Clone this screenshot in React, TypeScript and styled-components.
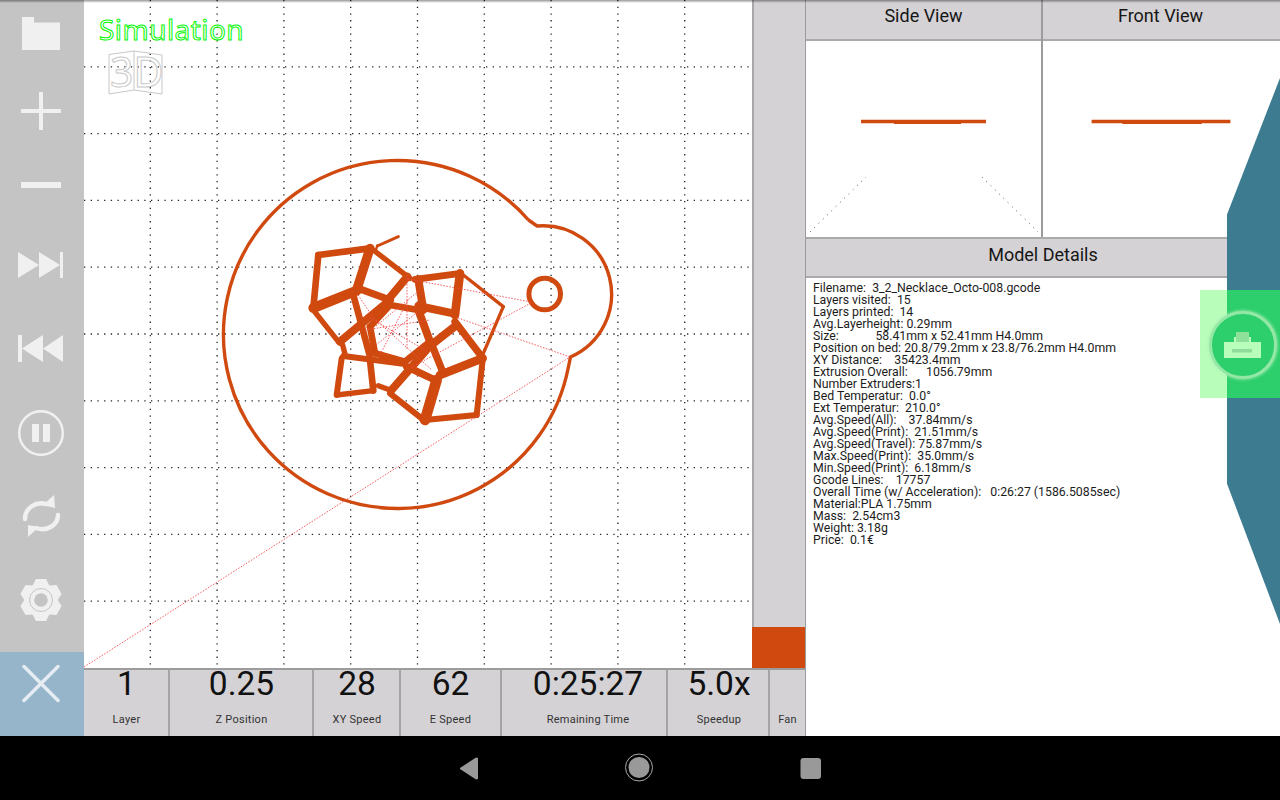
import styled, { createGlobalStyle } from 'styled-components';

const ORANGE = '#d04a10';
const PANEL = '#d4d2d5';
const RULE = '#9c9c9c';
const ICON = '#f0f0f0';

const stats = [
  { value: '1', label: 'Layer', width: 86, pad: 1 },
  { value: '0.25', label: 'Z Position', width: 144, pad: 1 },
  { value: '28', label: 'XY Speed', width: 87, pad: 1 },
  { value: '62', label: 'E Speed', width: 101, pad: 0 },
  { value: '0:25:27', label: 'Remaining Time', width: 166, pad: 8 },
  { value: '5.0x', label: 'Speedup', width: 102, pad: 2 },
  { value: '', label: 'Fan', width: 35, pad: 0 },
];

const details = [
  'Filename:  3_2_Necklace_Octo-008.gcode',
  'Layers visited:  15',
  'Layers printed:  14',
  'Avg.Layerheight: 0.29mm',
  'Size:            58.41mm x 52.41mm H4.0mm',
  'Position on bed: 20.8/79.2mm x 23.8/76.2mm H4.0mm',
  'XY Distance:    35423.4mm',
  'Extrusion Overall:      1056.79mm',
  'Number Extruders:1',
  'Bed Temperatur:  0.0°',
  'Ext Temperatur:  210.0°',
  'Avg.Speed(All):    37.84mm/s',
  'Avg.Speed(Print):  21.51mm/s',
  'Avg.Speed(Travel): 75.87mm/s',
  'Max.Speed(Print):  35.0mm/s',
  'Min.Speed(Print):  6.18mm/s',
  'Gcode Lines:    17757',
  'Overall Time (w/ Acceleration):   0:26:27 (1586.5085sec)',
  'Material:PLA 1.75mm',
  'Mass:  2.54cm3',
  'Weight: 3.18g',
  'Price:  0.1€',
];

// extruded segments in 3x coords of the flower area: x1, y1, x2, y2, width
const segments = [
  [262, 78, 325, 50, 9], [258, 90, 262, 76, 7],
  [85, 105, 240, 85, 20], [240, 85, 200, 210, 28], [200, 212, 70, 264, 30], [70, 264, 85, 105, 20],
  [250, 90, 360, 175, 16], [352, 170, 295, 238, 24], [295, 238, 205, 205, 22],
  [375, 178, 512, 160, 20], [510, 160, 495, 285, 26], [490, 280, 385, 258, 24], [385, 178, 400, 270, 24],
  [520, 165, 640, 260, 10], [640, 260, 580, 400, 10], [495, 305, 575, 410, 22],
  [578, 420, 560, 585, 18], [560, 585, 405, 600, 18], [405, 600, 440, 480, 32], [450, 465, 578, 415, 26],
  [430, 385, 460, 460, 22], [350, 440, 435, 480, 22], [300, 520, 395, 595, 18], [305, 510, 420, 378, 24],
  [420, 378, 500, 315, 24],
  [155, 415, 140, 525, 18], [140, 525, 250, 512, 16], [250, 512, 240, 420, 20], [160, 408, 345, 432, 18],
  [70, 270, 145, 365, 16], [150, 365, 300, 240, 24], [190, 225, 240, 410, 20], [158, 375, 165, 402, 16],
  [265, 497, 300, 510, 16],
  [300, 255, 385, 270, 20], [385, 270, 420, 365, 24], [420, 365, 345, 425, 20],
  [345, 425, 255, 400, 20], [255, 400, 240, 320, 20], [240, 320, 300, 255, 20],
];

const travels = [
  [84, 667, 570, 357], [408, 279, 531, 302], [531, 303, 410, 368], [458, 318, 570, 357],
  [376, 326, 420, 290], [370, 318, 425, 350], [376, 345, 420, 310], [407, 275, 407, 350],
  [365, 330, 430, 320], [358, 295, 375, 320], [376, 320, 432, 370], [380, 355, 408, 300],
];

const gearPoints = () => {
  const points: string[] = [];
  for (let i = 0; i < 6; i++) {
    const a = (i * Math.PI) / 3 - Math.PI / 2;
    [[-0.62, 17], [-0.3, 21.500], [0.3, 21.500], [0.62, 17]].forEach(([d, r]) => {
      points.push(`${(41 + r * Math.cos(a + d * 0.8)).toFixed(1)},${(22 + r * Math.sin(a + d * 0.8)).toFixed(1)}`);
    });
  }
  return points.join(' ');
};

const GlobalStyle = createGlobalStyle`
  html, body { margin: 0; padding: 0; background: #000; }
  body { font-family: Roboto, "Liberation Sans", sans-serif; }
`;

const Screen = styled.div`
  position: relative;
  width: 1280px;
  height: 800px;
  overflow: hidden;
  display: flex;
  flex-direction: column;
`;

const TopShade = styled.div`
  position: absolute;
  top: 0;
  left: 0;
  right: 0;
  height: 3px;
  background: linear-gradient(rgba(0, 0, 0, 0.4), rgba(0, 0, 0, 0));
`;

const Workspace = styled.div`
  display: flex;
  height: 736px;
  background: #fff;
`;

const Sidebar = styled.div`
  width: 84px;
  flex-shrink: 0;
  display: flex;
  flex-direction: column;
  background: #c4c4c4;
`;

const ToolList = styled.div`
  height: 652px;
  padding-top: 17px;
  box-sizing: border-box;
`;

const ToolIcon = styled.svg<{ $top?: number }>`
  display: block;
  width: 84px;
  margin-top: ${(p) => p.$top ?? 0}px;
  fill: ${ICON};
  stroke: none;
`;

const CloseButton = styled.div`
  height: 84px;
  background: #96b4ca;
  display: flex;
  align-items: flex-start;
`;

const Center = styled.div`
  width: 721px;
  flex-shrink: 0;
  display: flex;
  flex-direction: column;
`;

const ViewRow = styled.div`
  display: flex;
  height: 668px;
`;

const Canvas = styled.div`
  position: relative;
  width: 668px;
  height: 668px;
  background: #fff;
`;

const Plot = styled.svg`
  display: block;
  width: 668px;
  height: 668px;
`;

const SimLabel = styled.span`
  position: absolute;
  left: 15px;
  top: 10px;
  font-family: "Noto Sans", sans-serif;
  font-size: 28px;
  line-height: 38px;
  letter-spacing: 0.45px;
  color: #fff;
  -webkit-text-stroke: 1px #00f800;
`;

const LayerSlider = styled.div`
  width: 53px;
  display: flex;
  flex-direction: column;
  justify-content: flex-end;
  box-sizing: border-box;
  background: ${PANEL};
  border-left: 2px solid #a8a8a8;
`;

const LayerFill = styled.div`
  height: 41px;
  margin-left: -2px;
  background: ${ORANGE};
`;

const StatRow = styled.div`
  display: flex;
  height: 68px;
  box-sizing: border-box;
  background: ${PANEL};
  border-top: 2px solid ${RULE};
`;

const StatCell = styled.div<{ $width: number; $pad: number }>`
  width: ${(p) => p.$width}px;
  padding-left: ${(p) => p.$pad}px;
  box-sizing: border-box;
  border-right: 2px solid #a4a4a4;
  display: flex;
  flex-direction: column;
  align-items: center;
  &:last-child { border-right: none; }
`;

const StatValue = styled.div`
  height: 40px;
  font-size: 33.500px;
  line-height: 28px;
  color: #111;
`;

const StatLabel = styled.div`
  font-size: 11px;
  line-height: 20px;
  letter-spacing: 0.25px;
  color: #333;
`;

const RightPanel = styled.div`
  flex: 1;
  display: flex;
  flex-direction: column;
  border-left: 1px solid #9c9c9c;
`;

const Views = styled.div`
  display: flex;
  height: 237px;
`;

const ViewColumn = styled.div<{ $width: number }>`
  width: ${(p) => p.$width}px;
  display: flex;
  flex-direction: column;
  box-sizing: border-box;
  & + & { border-left: 2px solid ${RULE}; }
`;

const PanelHeader = styled.div<{ $inset?: number }>`
  height: 41px;
  flex-shrink: 0;
  box-sizing: border-box;
  padding-right: ${(p) => p.$inset ?? 0}px;
  background: ${PANEL};
  border-bottom: 2px solid #aaa;
  font-size: 18px;
  line-height: 31px;
  text-align: center;
  color: #161616;
`;

const ViewSvg = styled.svg`
  display: block;
  flex: 1;
  width: 100%;
`;

const DetailsHeader = styled(PanelHeader)`
  border-top: 2px solid #aaa;
  line-height: 32px;
`;

const DetailsText = styled.div`
  padding: 4px 0 0 7px;
  font-size: 12.300px;
  line-height: 12px;
  white-space: pre;
  color: #1c1c1c;
`;

const SideFin = styled.div`
  position: absolute;
  right: 0;
  top: 78px;
  width: 53px;
  height: 546px;
  background: #3d7b90;
  clip-path: polygon(100% 0, 0 25%, 0 74.3%, 100% 100%);
`;

const PrintTab = styled.div`
  position: absolute;
  left: 1200px;
  top: 290px;
  width: 80px;
  height: 108px;
  background: linear-gradient(90deg, #b9fdba 27px, #2dce6c 27px);
`;

const PrintBadge = styled.div`
  position: absolute;
  left: 9px;
  top: 21px;
  width: 68px;
  height: 68px;
  box-sizing: border-box;
  border-radius: 50%;
  background: #2dce6c;
  border: 3px solid #93e8a6;
  box-shadow: 0 0 3px 1px rgba(170, 240, 180, 0.7);
  display: flex;
  align-items: center;
  justify-content: center;
`;

const NavBar = styled.div`
  height: 64px;
  background: #000;
`;

const NavIcons = styled.svg`
  display: block;
  width: 1280px;
  height: 64px;
`;

const Diagonals = styled.svg`
  position: absolute;
  left: 806px;
  top: 172px;
  width: 236px;
  height: 64px;
`;

function PrinterGlyph() {
  return (
    <svg width="38" height="28" viewBox="0 0 38 28">
      <rect x="10" y="6" width="17" height="8" fill="#b9fdba" />
      <rect x="12" y="1" width="13" height="11" fill="#8fe09a" />
      <rect x="0" y="11" width="37" height="16" fill="#b9fdba" />
      <rect x="8" y="18" width="20" height="3.5" fill="#8fdc9a" />
    </svg>
  );
}

function ProfileLine({ width, x1, x2, x3, x4 }: { width: number; x1: number; x2: number; x3: number; x4: number }) {
  return (
    <ViewSvg viewBox={`0 0 ${width} 196`} preserveAspectRatio="none">
      <line x1={x1} y1="80.500" x2={x2} y2="80.500" stroke={ORANGE} strokeWidth="3.500" />
      <line x1={x3} y1="81.500" x2={x4} y2="81.500" stroke={ORANGE} strokeWidth="3" />
    </ViewSvg>
  );
}

function DiagonalMarks() {
  return (
    <Diagonals viewBox="0 0 236 64">
      <g stroke="#555" strokeWidth="1" strokeDasharray="1 5">
        <line x1="4" y1="60" x2="60" y2="5" />
        <line x1="176" y1="5" x2="232" y2="60" />
      </g>
    </Diagonals>
  );
}

export default function App() {
  const grid = Array.from({ length: 9 }, (_, i) => (i + 1) * 66.8);
  return (
    <Screen>
      <GlobalStyle />
      <Workspace>
        <Sidebar>
          <ToolList>
            <ToolIcon viewBox="0 0 84 33" height="33">
              <path d="M22 0h12v5.500h26V33H22z" />
            </ToolIcon>
            <ToolIcon $top={42} viewBox="0 0 84 38" height="38">
              <rect x="39" y="0" width="4" height="38" />
              <rect x="21" y="17" width="40" height="4" />
            </ToolIcon>
            <ToolIcon $top={51} viewBox="0 0 84 7" height="7">
              <rect x="21" y="1" width="40" height="6" />
            </ToolIcon>
            <ToolIcon $top={64} viewBox="0 0 84 26" height="26">
              <path d="M18 0l21 13-21 13zM39 0l21 13-21 13z" />
              <rect x="60" y="0" width="3" height="26" />
            </ToolIcon>
            <ToolIcon $top={57} viewBox="0 0 84 27" height="27">
              <path d="M43 0v27L22 13.500zM63 0v27L43 13.500z" />
              <rect x="18" y="0" width="4" height="27" />
            </ToolIcon>
            <ToolIcon $top={48} viewBox="0 0 84 46" height="46">
              <circle cx="41" cy="23" r="21.800" fill="none" stroke={ICON} strokeWidth="2.500" />
              <rect x="32" y="14" width="7" height="18" />
              <rect x="43" y="14" width="7" height="18" />
            </ToolIcon>
            <ToolIcon $top={39} viewBox="0 0 84 42" height="42">
              <path d="M25 24C25 13 36 6 46 9" fill="none" stroke={ICON} strokeWidth="4.500" strokeLinecap="round" />
              <path d="M54 0l1 13-12-3z" />
              <path d="M58 20C58 30 47 37 36 33" fill="none" stroke={ICON} strokeWidth="4.500" strokeLinecap="round" />
              <path d="M28 30l11 2-11 10z" />
            </ToolIcon>
            <ToolIcon $top={41} viewBox="0 0 84 44" height="44">
              <polygon points={gearPoints()} />
              <circle cx="41" cy="22" r="11.500" fill="none" stroke="#c4c4c4" strokeWidth="1" />
              <circle cx="41" cy="22" r="6.800" fill="#c4c4c4" />
            </ToolIcon>
          </ToolList>
          <CloseButton>
            <ToolIcon $top={13} viewBox="0 0 84 38" height="38">
              <path d="M24 1.500l34 34M58 1.500l-34 34" stroke="#e6edf2" strokeWidth="3.500" strokeLinecap="round" fill="none" />
            </ToolIcon>
          </CloseButton>
        </Sidebar>

        <Center>
          <ViewRow>
            <Canvas>
              <Plot viewBox="84 0 668 668">
                <g stroke="#222" strokeWidth="1.300" strokeDasharray="1.300 5.400">
                  {grid.map((p) => (
                    <line key={`v${p}`} x1={83.5 + p} y1="0" x2={83.5 + p} y2="668" />
                  ))}
                  {grid.map((p) => (
                    <line key={`h${p}`} x1="84" y1={p} x2="752" y2={p} />
                  ))}
                </g>
                <g fill="none" stroke="#c8c8c8" strokeWidth="1">
                  <path d="M109 54.500L134 51l28 4v39l-28-4-25 4zM134 51v39" />
                  <text x="110" y="87" fontFamily="Noto Sans, sans-serif" fontSize="41">3D</text>
                </g>
                <path
                  d="M528.500 220L537 226A68.500 68.500 0 0 1 570.500 357L568.200 368A174 174 0 1 1 528.500 220"
                  fill="none"
                  stroke={ORANGE}
                  strokeWidth="3.400"
                />
                <circle cx="544.700" cy="294" r="15.800" fill="none" stroke={ORANGE} strokeWidth="5" />
                <g transform="translate(290 220) scale(0.3333)" stroke={ORANGE} strokeLinecap="round" fill="none">
                  {segments.map(([x1, y1, x2, y2, w]) => (
                    <line key={`${x1}-${y1}-${x2}`} x1={x1} y1={y1} x2={x2} y2={y2} strokeWidth={w} />
                  ))}
                </g>
                <g stroke="#f4484c" strokeWidth="0.900" strokeDasharray="1.500 1.500">
                  {travels.map(([x1, y1, x2, y2]) => (
                    <line key={`${x1}-${y1}-${x2}`} x1={x1} y1={y1} x2={x2} y2={y2} />
                  ))}
                </g>
              </Plot>
              <SimLabel>Simulation</SimLabel>
            </Canvas>
            <LayerSlider>
              <LayerFill />
            </LayerSlider>
          </ViewRow>
          <StatRow>
            {stats.map((s) => (
              <StatCell key={s.label} $width={s.width} $pad={s.pad}>
                <StatValue>{s.value}</StatValue>
                <StatLabel>{s.label}</StatLabel>
              </StatCell>
            ))}
          </StatRow>
        </Center>

        <RightPanel>
          <Views>
            <ViewColumn $width={235}>
              <PanelHeader>Side View</PanelHeader>
              <ProfileLine width={235} x1={55} x2={180} x3={88} x4={155} />
              <DiagonalMarks />
            </ViewColumn>
            <ViewColumn $width={239}>
              <PanelHeader $inset={2}>Front View</PanelHeader>
              <ProfileLine width={239} x1={49} x2={189} x3={80} x4={160} />
            </ViewColumn>
          </Views>
          <DetailsHeader>Model Details</DetailsHeader>
          <DetailsText>{details.join('\n')}</DetailsText>
        </RightPanel>
      </Workspace>

      <NavBar>
        <NavIcons viewBox="0 0 1280 64">
          <path d="M478 22v21l-2 .5L460 33v-1l16-10.500z" fill="#999" />
          <circle cx="639" cy="31.500" r="13.500" fill="none" stroke="#aaa" strokeWidth="1" />
          <circle cx="639" cy="31.500" r="10.500" fill="#999" />
          <rect x="800.500" y="22" width="20.500" height="21" rx="3" fill="#999" />
        </NavIcons>
      </NavBar>

      <TopShade />
      <SideFin />
      <PrintTab>
        <PrintBadge>
          <PrinterGlyph />
        </PrintBadge>
      </PrintTab>
    </Screen>
  );
}
